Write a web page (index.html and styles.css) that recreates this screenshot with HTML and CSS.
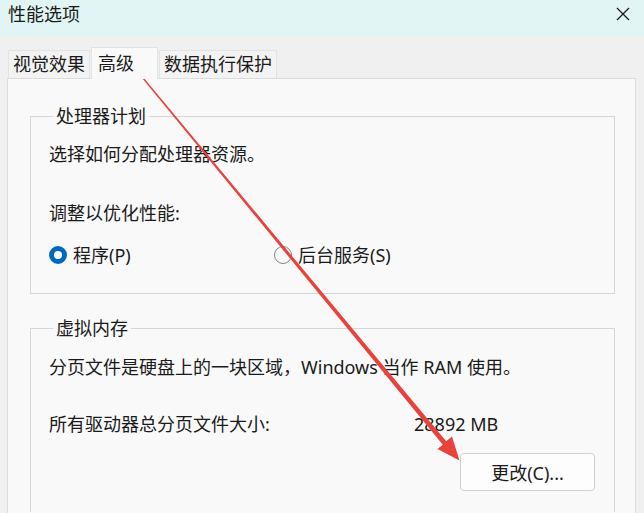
FILE: index.html
```html
<!DOCTYPE html>
<html lang="zh-CN">
<head>
  <meta charset="UTF-8" />
  <title>性能选项</title>
  <link rel="stylesheet" href="styles.css">
</head>
<body>

<div class="window">
  <header class="titlebar">
    <span class="title">性能选项</span>
    <svg class="close" viewBox="0 0 16 16" width="16" height="16">
      <path d="M2 2 L14 14 M14 2 L2 14" stroke="#1b1b1b" stroke-width="1.3" fill="none"/>
    </svg>
  </header>

  <div class="tabs">
    <div class="tab">视觉效果</div>
    <div class="tab active">高级</div>
    <div class="tab">数据执行保护</div>
  </div>

  <div class="panel">
    <fieldset class="group">
      <legend>处理器计划</legend>
      <p class="line first">选择如何分配处理器资源。</p>
      <p class="line second">调整以优化性能:</p>
      <div class="radios">
        <label class="radio checked"><span class="dot"></span>程序(P)</label>
        <label class="radio"><span class="dot"></span>后台服务(S)</label>
      </div>
    </fieldset>

    <fieldset class="group memory">
      <legend>虚拟内存</legend>
      <p class="line first">分页文件是硬盘上的一块区域，Windows 当作 RAM 使用。</p>
      <div class="line second size-row">
        <span>所有驱动器总分页文件大小:</span>
        <span>28892 MB</span>
      </div>
      <div class="actions">
        <button class="btn">更改(C)...</button>
      </div>
    </fieldset>
  </div>
</div>

<!-- red annotation arrow over the dialog -->
<svg class="arrow" viewBox="0 0 644 513" width="644" height="513">
  <polygon fill="#e8423d"
    points="138.5,71.6 446.2,441.2 452,436.5 459.5,460.5 437.5,449 442.8,444.8 137.5,72.4"/>
</svg>

</body>
</html>
```

FILE: styles.css
```css
* {
  box-sizing: border-box;
  margin: 0;
  padding: 0;
}

body {
  width: 644px;
  height: 513px;
  overflow: hidden;
  position: relative;
  background: #f0f0f0;
  font-family: "Noto Sans", "Noto Sans CJK SC", sans-serif;
  font-size: 18px;
  color: #1a1a1a;
}

.titlebar {
  height: 36px;
  background: #e1f6f4;
  display: flex;
  align-items: center;
  justify-content: space-between;
  padding: 0 13px 8px 8px;
}

.title {
  font-size: 18px;
  line-height: 24px;
}

.tabs {
  display: flex;
  align-items: flex-end;
  height: 42px;
  padding-left: 8px;
}

.tab {
  height: 28px;
  line-height: 26px;
  padding: 0 4px;
  background: #f3f3f3;
  border: 1px solid #e3e3e3;
  border-bottom: none;
}

.tab.active {
  height: 32px;
  line-height: 30px;
  width: 67px;
  padding-left: 6px;
  margin-bottom: -1px;
  background: #f9f9f9;
  position: relative;
  z-index: 1;
}

.tab + .tab {
  margin-left: 1px;
}

.panel {
  margin-left: 7px;
  width: 629px;
  height: 435px;
  background: #f9f9f9;
  border: 1px solid #dcdcdc;
  border-bottom: none;
  padding: 27px 0 0 22px;
}

.group {
  width: 585px;
  border: 1px solid #d6d6d6;
  padding: 0 0 26px 18px;
}

.group legend {
  margin-left: 4px;
  padding: 0 3px;
  line-height: 20px;
}

.line {
  line-height: 24px;
}

.line.first {
  margin-top: 16px;
}

.line.second {
  margin-top: 35px;
}

.radios {
  display: flex;
  margin-top: 18px;
  height: 24px;
}

.radio {
  display: flex;
  align-items: center;
  gap: 6px;
  width: 225px;
  line-height: 24px;
}

.dot {
  width: 18px;
  height: 18px;
  border-radius: 50%;
  border: 1px solid #858585;
  background: #f9f9f9;
}

.radio.checked .dot {
  border: 5px solid #0067c0;
  background: #fff;
}

.memory {
  margin-top: 24px;
  height: 194px;
  border-bottom: none;
  padding-bottom: 0;
}

.memory .line.first {
  margin-top: 17px;
}

.memory .line.second {
  margin-top: 33px;
}

.size-row {
  display: grid;
  grid-template-columns: 365px auto;
}

.actions {
  display: flex;
  justify-content: flex-end;
  padding-right: 19px;
  margin-top: 17px;
}

.btn {
  width: 135px;
  height: 38px;
  background: #fdfdfd;
  border: 1px solid #d0d0d0;
  border-radius: 4px;
  font: inherit;
  color: #1a1a1a;
}

.arrow {
  position: absolute;
  left: 0;
  top: 0;
  pointer-events: none;
}
```
